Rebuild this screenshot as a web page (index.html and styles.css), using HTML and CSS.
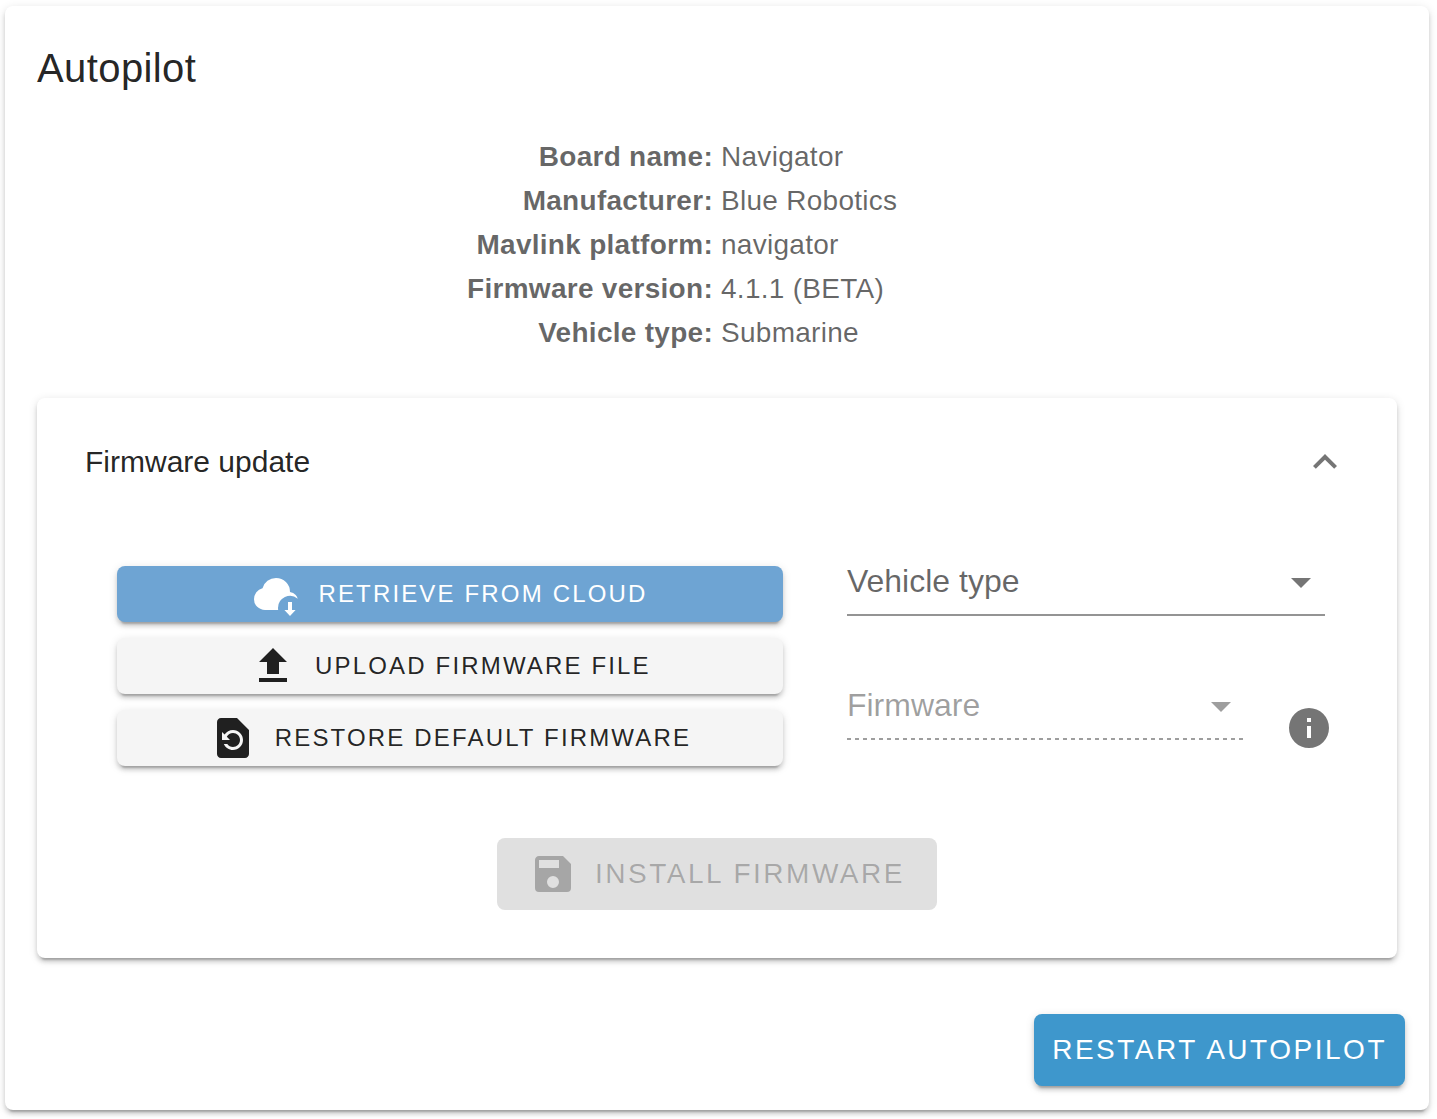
FILE: index.html
```html
<!DOCTYPE html>
<html lang="en">
<head>
<meta charset="utf-8">
<meta name="viewport" content="width=device-width, initial-scale=1">
<title>Autopilot</title>
<link rel="stylesheet" href="styles.css">
</head>
<body>
<main class="card">
  <h1 class="card-title">Autopilot</h1>

  <dl class="info">
    <dt>Board name:</dt><dd>Navigator</dd>
    <dt>Manufacturer:</dt><dd>Blue Robotics</dd>
    <dt>Mavlink platform:</dt><dd>navigator</dd>
    <dt>Firmware version:</dt><dd>4.1.1 (BETA)</dd>
    <dt>Vehicle type:</dt><dd>Submarine</dd>
  </dl>

  <section class="panel">
    <h2 class="panel-heading">
      <button class="panel-toggle" type="button" aria-expanded="true" aria-controls="firmware-update">
        <span>Firmware update</span>
        <svg class="icon" viewBox="0 0 24 24" aria-hidden="true"><path d="M7.41,15.41L12,10.83L16.59,15.41L18,14L12,8L6,14L7.41,15.41Z"/></svg>
      </button>
    </h2>

    <form class="panel-body" id="firmware-update">
      <div class="columns">
        <div class="sources">
          <button class="btn btn-selected" type="button">
            <svg class="icon" viewBox="0 0 24 24" aria-hidden="true"><path d="M6.5 20Q4.22 20 2.61 18.43Q1 16.85 1 14.58Q1 12.63 2.17 11.1Q3.35 9.57 5.25 9.15Q5.88 6.85 7.75 5.43Q9.63 4 12 4Q14.93 4 16.96 6.04Q19 8.07 19 11Q20.73 11.2 21.86 12.5Q22.6 13.3 22.86 14.4A6 6 0 0 0 13 19C13 19.34 13.04 19.67 13.09 20ZM18 16V20H16.2L19 23L21.8 20H20V16Z"/></svg>
            Retrieve from cloud
          </button>
          <button class="btn" type="button">
            <svg class="icon" viewBox="0 0 24 24" aria-hidden="true"><path d="M9,16V10H5L12,3L19,10H15V16H9M5,20V18H19V20H5Z"/></svg>
            Upload firmware file
          </button>
          <button class="btn" type="button">
            <svg class="icon" viewBox="0 0 24 24" aria-hidden="true"><path d="M14 2H6c-1.1 0-1.99.9-1.99 2L4 20c0 1.1.89 2 1.99 2H18c1.1 0 2-.9 2-2V8l-6-6zm-2 16c-2.05 0-3.81-1.24-4.58-3h1.71c.63.9 1.68 1.5 2.87 1.5 1.93 0 3.5-1.57 3.5-3.5S13.93 9.5 12 9.5c-1.35 0-2.52.78-3.1 1.9l1.6 1.6h-4V9l1.3 1.3C8.69 8.92 10.23 8 12 8c2.76 0 5 2.24 5 5s-2.24 5-5 5z"/></svg>
            Restore default firmware
          </button>
        </div>

        <div class="fields">
          <div class="field">
            <label for="vehicle">Vehicle type</label>
            <select id="vehicle"><option value=""></option></select>
            <svg class="icon" viewBox="0 0 24 24" aria-hidden="true"><path d="M7,10L12,15L17,10H7Z"/></svg>
          </div>
          <div class="field-row">
            <div class="field field-disabled">
              <label for="firmware">Firmware</label>
              <select id="firmware" disabled><option value=""></option></select>
              <svg class="icon" viewBox="0 0 24 24" aria-hidden="true"><path d="M7,10L12,15L17,10H7Z"/></svg>
            </div>
            <svg class="icon info-icon" viewBox="0 0 24 24" role="img" aria-label="Information"><path d="M13,9H11V7H13M13,17H11V11H13M12,2A10,10 0 0,0 2,12A10,10 0 0,0 12,22A10,10 0 0,0 22,12A10,10 0 0,0 12,2Z"/></svg>
          </div>
        </div>
      </div>

      <button class="btn btn-large btn-install" type="submit" disabled>
        <svg class="icon" viewBox="0 0 24 24" aria-hidden="true"><path d="M15,9H5V5H15M12,19A3,3 0 0,1 9,16A3,3 0 0,1 12,13A3,3 0 0,1 15,16A3,3 0 0,1 12,19M17,3H5C3.89,3 3,3.9 3,5V19A2,2 0 0,0 5,21H19A2,2 0 0,0 21,19V7L17,3Z"/></svg>
        Install firmware
      </button>
    </form>
  </section>

  <footer class="actions">
    <button class="btn btn-large btn-primary" type="button">Restart autopilot</button>
  </footer>
</main>
</body>
</html>
```
FILE: styles.css
```css
:root {
  --text: rgba(0, 0, 0, 0.87);
  --text-secondary: rgba(0, 0, 0, 0.6);
  --text-disabled: rgba(0, 0, 0, 0.38);
  --icon: rgba(0, 0, 0, 0.54);
  --elevation: 0 6px 2px -4px rgba(0, 0, 0, 0.2),
    0 4px 4px 0 rgba(0, 0, 0, 0.14),
    0 2px 10px 0 rgba(0, 0, 0, 0.12);
}

* {
  box-sizing: border-box;
}

body {
  margin: 0;
  padding: 6px 8px 9px 5px;
  background: #fff;
  color: var(--text);
  font-family: "Liberation Sans", Arial, sans-serif;
}

button,
select {
  font: inherit;
  color: inherit;
  border: 0;
  margin: 0;
}

.icon {
  width: 48px;
  height: 48px;
  flex: none;
  fill: currentColor;
}

.card {
  background: #fff;
  border-radius: 8px;
  box-shadow: var(--elevation);
}

.card-title {
  margin: 0;
  padding: 30px 32px 35px;
  font-size: 40px;
  font-weight: 400;
  letter-spacing: 0.01em;
  line-height: 64px;
}

.info {
  display: grid;
  grid-template-columns: 1fr 1fr;
  column-gap: 8px;
  margin: 0 0 43px;
  font-size: 28px;
  letter-spacing: 0.01em;
  line-height: 44px;
  color: var(--text-secondary);
}

.info dt {
  font-weight: 700;
  text-align: right;
}

.info dd {
  margin: 0;
}

.panel {
  margin: 0 32px 56px;
  border-radius: 8px;
  background: #fff;
  box-shadow: var(--elevation);
}

.panel-heading {
  margin: 0;
  font-size: 30px;
  font-weight: 400;
}

.panel-toggle {
  display: flex;
  align-items: center;
  justify-content: space-between;
  width: 100%;
  min-height: 128px;
  padding: 32px 48px;
  background: none;
  text-align: left;
}

.panel-toggle .icon {
  color: var(--icon);
}

.panel-body {
  display: flex;
  flex-direction: column;
  align-items: center;
  gap: 72px;
  padding: 24px 72px 48px;
}

.columns {
  display: grid;
  grid-template-columns: 39fr 28fr;
  gap: 64px;
  width: 100%;
  padding-left: 8px;
}

.sources {
  display: flex;
  flex-direction: column;
  gap: 16px;
  padding-top: 16px;
}

.btn {
  display: flex;
  align-items: center;
  justify-content: center;
  gap: 18px;
  height: 56px;
  padding: 0 24px;
  border-radius: 8px;
  background: #f5f5f5;
  box-shadow: var(--elevation);
  font-size: 24px;
  letter-spacing: 0.09em;
  text-transform: uppercase;
  white-space: nowrap;
}

.btn-selected {
  background: #6ea4d3;
  color: #fff;
}

.btn-large {
  height: 72px;
  font-size: 28px;
}

.btn-install {
  padding: 0 32px;
  background: #e0e0e0;
  box-shadow: none;
  color: rgba(0, 0, 0, 0.26);
}

.btn-primary {
  padding: 0 18px;
  background: #3e97cc;
  color: #fff;
}

.fields {
  display: flex;
  flex-direction: column;
  gap: 58px;
}

.field {
  display: grid;
  grid-template-columns: 1fr 48px;
  align-items: start;
  font-size: 32px;
  color: var(--text-secondary);
}

.field label {
  grid-area: 1 / 1;
  line-height: 62px;
  pointer-events: none;
}

.field select {
  grid-area: 1 / 1 / 2 / 3;
  width: 100%;
  height: 66px;
  appearance: none;
  background: none;
  border-bottom: 2px solid #949494;
  border-radius: 0;
}

.field .icon {
  grid-area: 1 / 2;
  height: 64px;
  color: var(--icon);
  pointer-events: none;
}

.field-disabled,
.field-disabled .icon {
  color: var(--text-disabled);
}

.field-disabled select {
  border-bottom: 0;
  background: repeating-linear-gradient(to right, #9e9e9e 0 4px, transparent 4px 8px) left bottom / 100% 2px no-repeat;
  opacity: 1;
}

.field-row {
  display: flex;
  align-items: flex-start;
  gap: 40px;
  margin-right: -8px;
}

.field-row .field {
  flex: 1;
}

.info-icon {
  margin-top: 30px;
  color: var(--icon);
}

.actions {
  display: flex;
  justify-content: flex-end;
  padding: 0 24px 24px;
}
```
